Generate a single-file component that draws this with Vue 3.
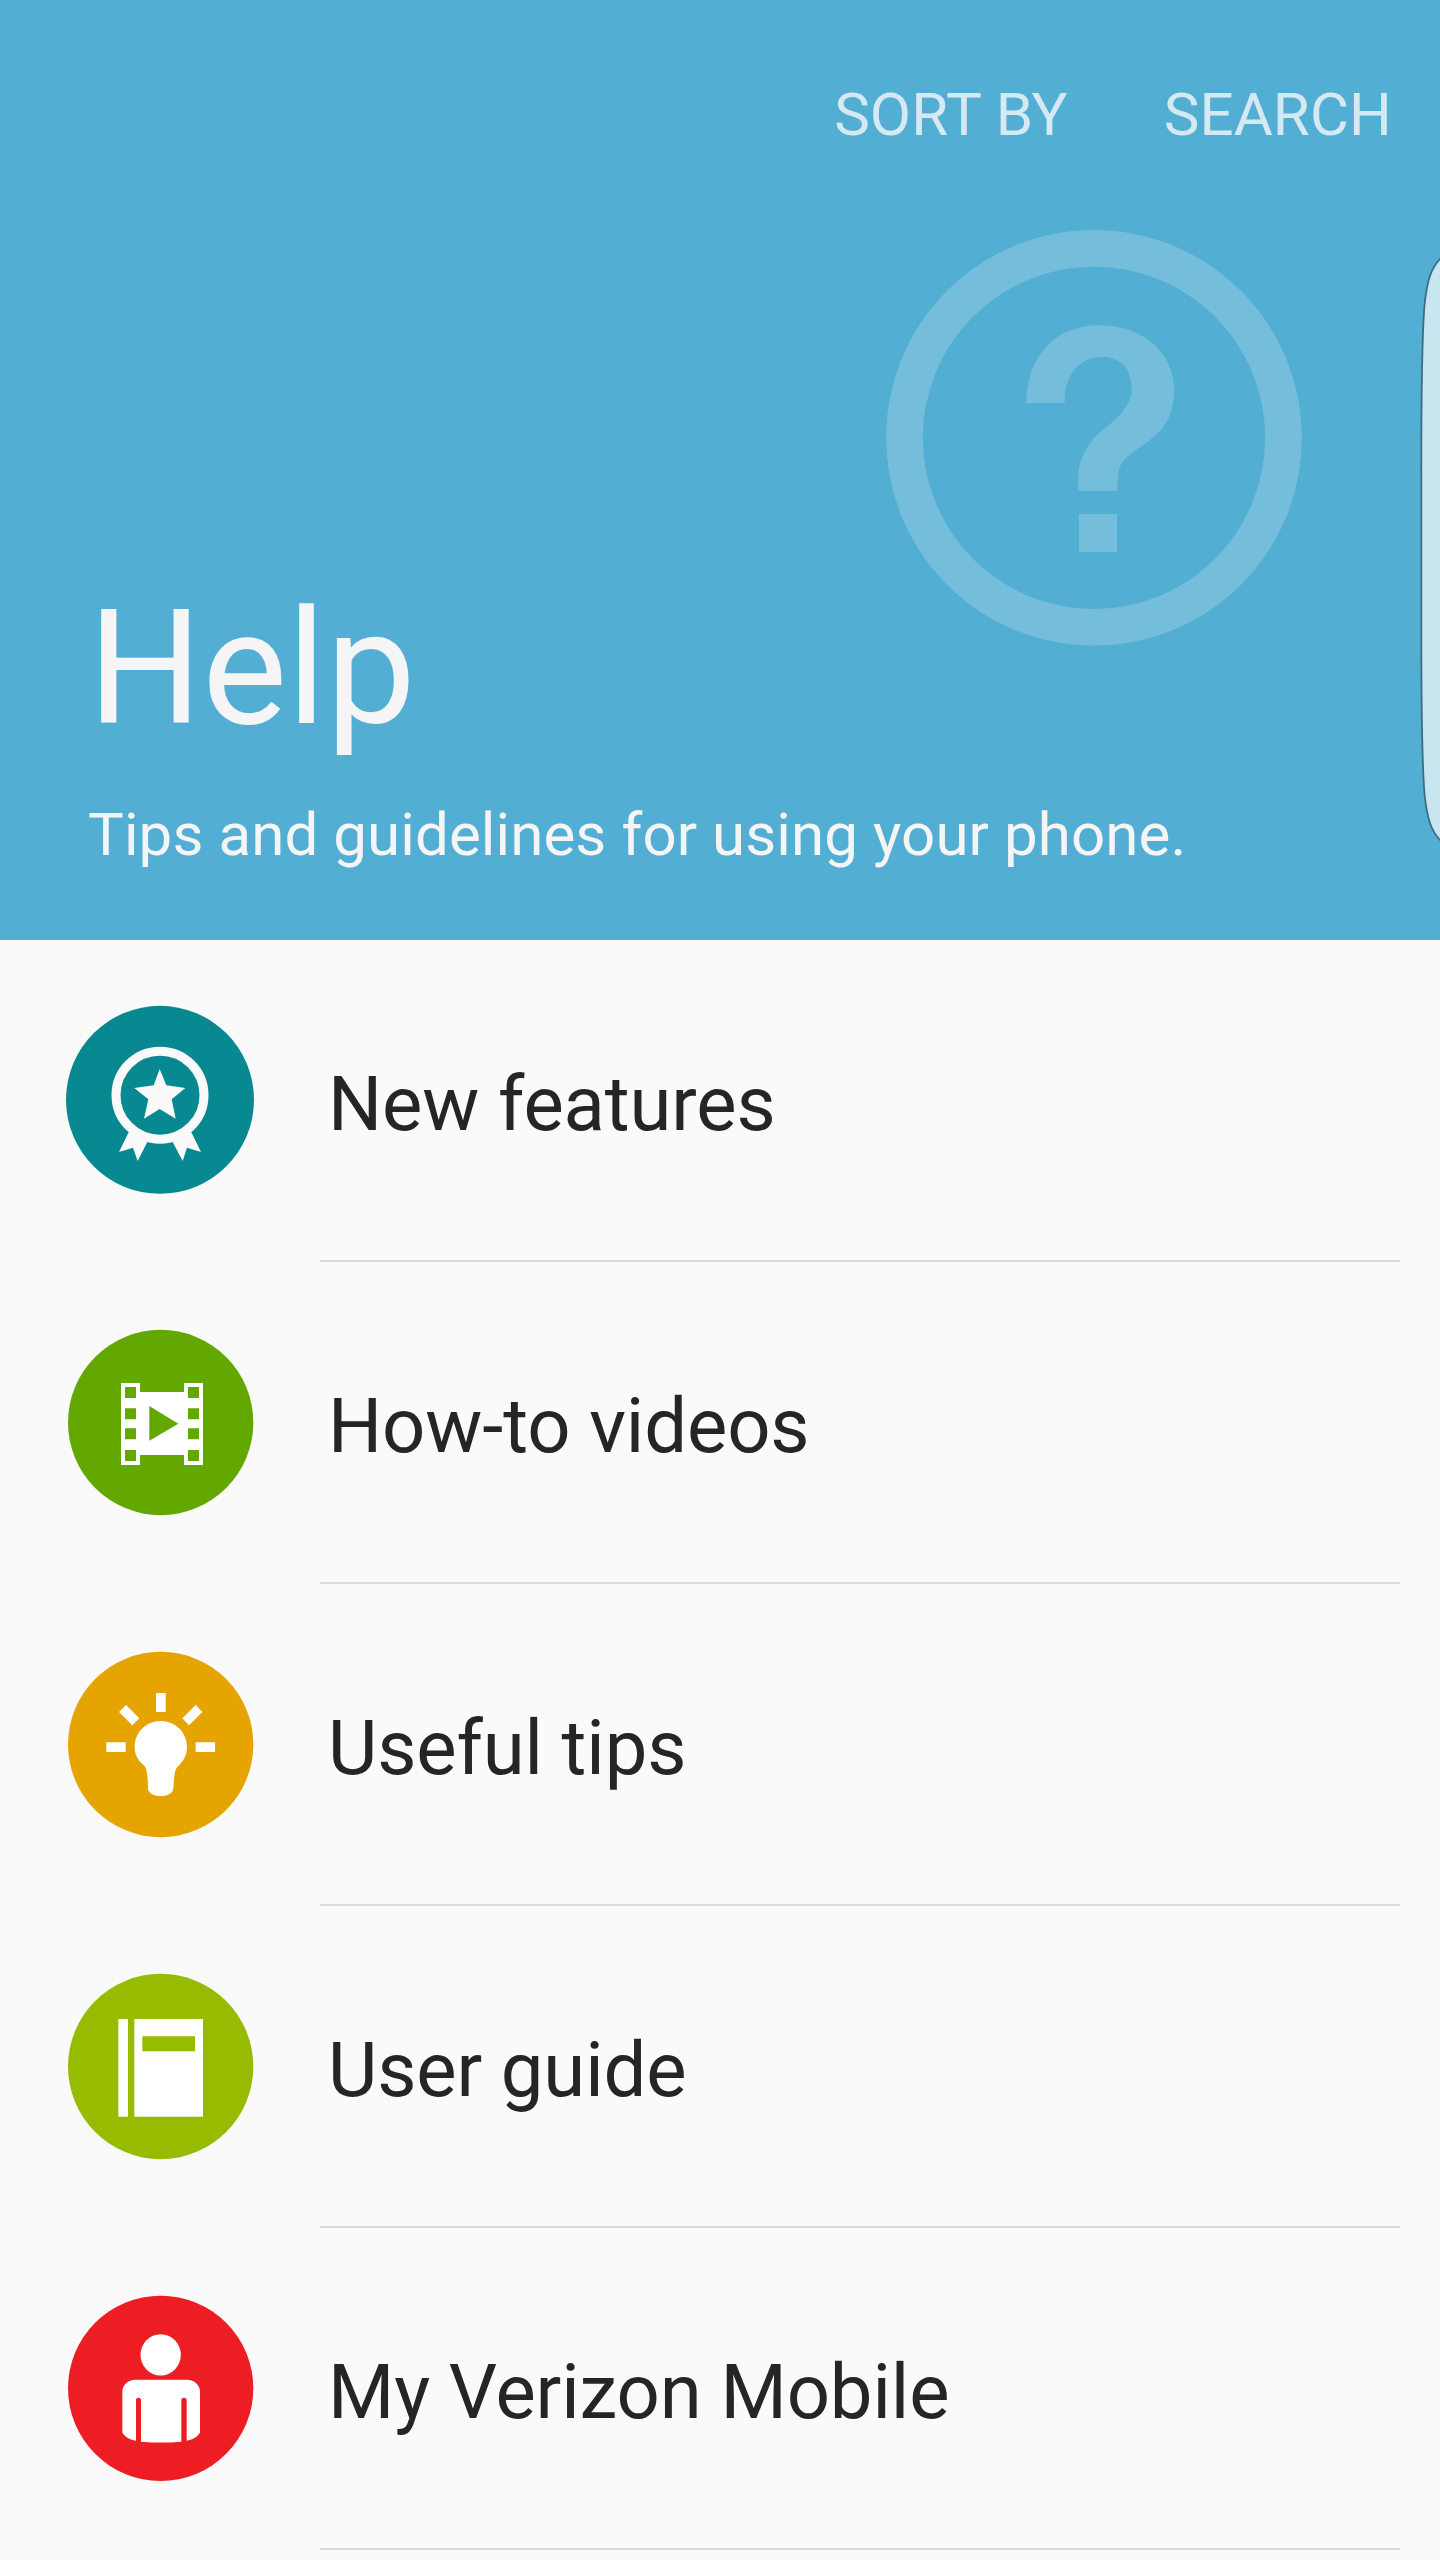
<script setup>
const actions = ['Sort by', 'Search']

const topics = [
  { id: 'features', label: 'New features', color: '#088890', viewBox: '0 0 660 660', cx: 330, cy: 329.5, r: 282 },
  { id: 'videos', label: 'How-to videos', color: '#63a800', viewBox: '0 6 660 660', cx: 332, cy: 337.5, r: 278 },
  { id: 'tips', label: 'Useful tips', color: '#e6a400', viewBox: '0 -3 660 660', cx: 332, cy: 328.5, r: 278 },
  { id: 'guide', label: 'User guide', color: '#97bb00', viewBox: '0 3 660 660', cx: 332, cy: 334.5, r: 278 },
  { id: 'carrier', label: 'My Verizon Mobile', color: '#ed1d24', viewBox: '0 -6 660 660', cx: 332, cy: 325, r: 278 },
]
</script>

<template>
  <main class="screen">
    <header class="hero">
      <nav class="actions">
        <button v-for="action in actions" :key="action" class="action">{{ action }}</button>
      </nav>
      <svg class="hero-mark" viewBox="0 0 1350 1350" aria-hidden="true">
        <circle cx="672" cy="683.5" r="568.5" fill="none" stroke="#74bedb" stroke-width="110" />
        <path
          fill="#74bedb"
          d="M468 579C473 430 560 346 688 346C824 346 912 432 912 540C912 684 806 696 756 758C742 778 743 806 742 843H625C625 790 624 768 640 734C680 650 722 660 768 590C780 572 786 554 785 534C783 470 748 441 694 441C626 441 581 502 584 579ZM627 912H741V1026H627Z"
        />
      </svg>
      <h1 class="title">Help</h1>
      <p class="subtitle">Tips and guidelines for using your phone.</p>
    </header>

    <ul class="topics">
      <li v-for="topic in topics" :key="topic.id" class="topic">
        <svg class="topic-icon" :viewBox="topic.viewBox" aria-hidden="true">
          <circle :cx="topic.cx" :cy="topic.cy" :r="topic.r" :fill="topic.color" />

          <g v-if="topic.id === 'features'" fill="#fafafa">
            <circle cx="330" cy="315.500" r="132" fill="none" stroke="#fafafa" stroke-width="27" />
            <path d="M329 237L349 286L406 294L365 328L377 386L329 357L282 386L295 328L253 294L311 286Z" />
            <path d="M236 427L207 486L249 473L263 513L292 456L270 435ZM424 427L453 486L411 473L398 513L368 456L392 435Z" />
          </g>

          <g v-else-if="topic.id === 'videos'">
            <path
              fill="#fff"
              fill-rule="evenodd"
              d="M213 219H270V246H402V219H459V465H402V435H270V465H213ZM225 231V264H258V231ZM225 295V328H258V295ZM225 355V388H258V355ZM225 420V453H258V420ZM414 231V264H447V231ZM414 295V328H447V295ZM414 355V388H447V355ZM414 420V453H447V420ZM298 288V392L385 341Z"
            />
          </g>

          <g v-else-if="topic.id === 'tips'" fill="#fff">
            <path d="M332 258C375 258 411 292 411 336C411 360 400 380 383 395C374 403 372 425 370 461C369 474 353 483 332 483C311 483 295 474 294 461C293 425 292 403 283 392C265 378 254 360 254 336C254 292 289 258 332 258Z" />
            <path d="M318 174H347V231H318ZM169 322H227V351H169ZM437 322H495V351H437ZM228 210L268 250L247 271L207 231ZM437 210L457 231L417 271L397 250Z" />
          </g>

          <g v-else-if="topic.id === 'guide'">
            <path fill="#fff" fill-rule="evenodd" d="M205 192H234V485H205ZM253 192H459V485H253ZM277 244V289H435V244Z" />
          </g>

          <g v-else fill="#fff">
            <ellipse cx="332" cy="224.500" rx="60.500" ry="62" />
            <path d="M256 299H411C433 299 450 314 450 335V458C442 471 427 479 410 482V360C410 351 394 351 394 360V485Q333 490 273 485V360C273 351 258 351 258 360V482C239 479 225 471 217 458V335C217 314 234 299 256 299Z" />
          </g>
        </svg>
        <div class="topic-body">{{ topic.label }}</div>
      </li>
    </ul>

    <svg class="edge-handle" viewBox="0 0 22 602" aria-hidden="true">
      <path
        d="M24 8C13 18 9 32 6.500 56C4 88 3.300 130 3.300 220V381C3.300 471 4 513 6.500 545C9 569 13 583 24 593Z"
        fill="#c8e6f0"
        stroke="#3f6d80"
        stroke-width="1.800"
      />
    </svg>
  </main>
</template>

<style>
body {
  margin: 0;
  background: #fafafa;
}
</style>

<style scoped>
.screen {
  position: relative;
  width: 1440px;
  height: 2560px;
  overflow: hidden;
  background: #fafafa;
  color: #252525;
  font-family: Roboto, sans-serif;
}

.hero {
  position: relative;
  box-sizing: border-box;
  display: flex;
  flex-direction: column;
  height: 940px;
  padding: 79px 48px 70px 88px;
  background: #53aed4;
  color: #f5f5f5;
}

.actions {
  display: flex;
  justify-content: flex-end;
  gap: 96px;
}

.action {
  padding: 0;
  border: 0;
  background: none;
  color: #d5e9f3;
  font: 400 60px/71px Roboto, sans-serif;
  letter-spacing: 0.1px;
  text-transform: uppercase;
}

.hero-mark {
  position: absolute;
  top: 210px;
  left: 870px;
  width: 450px;
  height: 450px;
}

.title {
  margin: auto 0 0;
  font-size: 160px;
  font-weight: 400;
  line-height: 187px;
}

.subtitle {
  margin: 37px 0 0;
  font-size: 60px;
  line-height: 71px;
  letter-spacing: 0.1px;
}

.topics {
  margin: 0;
  padding: 0;
  list-style: none;
}

.topic {
  display: flex;
  height: 322px;
  padding: 0 40px 0 50px;
}

.topic-icon {
  flex: none;
  width: 220px;
  height: 220px;
  margin: 50px 50px 0 0;
}

.topic-body {
  box-sizing: border-box;
  flex: 1;
  padding: 119px 0 0 8px;
  border-bottom: 2px solid #d9d9d9;
  font-size: 76px;
  line-height: 90px;
  letter-spacing: -0.12px;
  white-space: nowrap;
}

.edge-handle {
  position: absolute;
  top: 249px;
  right: 0;
  width: 22px;
  height: 602px;
}
</style>
